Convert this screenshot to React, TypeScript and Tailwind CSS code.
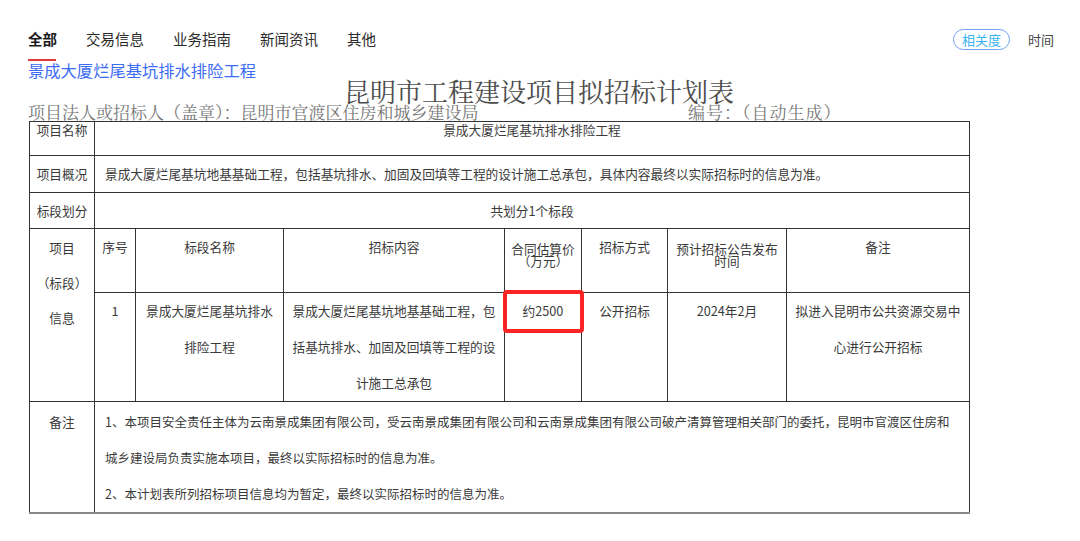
import React from 'react';

const sans = { fontFamily: '"Noto Sans CJK SC", "Noto Sans", sans-serif' };
const serif = { fontFamily: '"Noto Serif CJK SC", "Noto Sans CJK SC", serif' };

const tabs = ['全部', '交易信息', '业务指南', '新闻资讯', '其他'];

const cell = 'border border-[#333] p-0 align-top text-center';

const App: React.FC = () => {
  return (
    <div className="w-[1080px] h-[541px] bg-white overflow-hidden text-[#333]" style={sans}>
      {/* top tabs */}
      <div className="flex items-center justify-between pt-[28px] pl-[28px] pr-[26px] h-[50px]">
        <div className="flex items-center gap-[29px] h-[22px]">
          {tabs.map((t, i) => (
            <div
              key={t}
              className={
                i === 0
                  ? 'relative text-[14.5px] leading-[22px] font-bold text-[#1a1a1a]'
                  : 'text-[14.5px] leading-[22px] text-[#2b2b2b]'
              }
            >
              {t}
              {i === 0 && <span className="absolute left-0 top-[31px] h-[2px] w-[28px] bg-[#e33b3b]" />}
            </div>
          ))}
        </div>
        <div className="flex items-center gap-[18px]">
          <span className="h-[21px] w-[57px] rounded-full border border-[#72a2f4] text-[13px] leading-[19px] text-center text-[#3bb3ef]">
            相关度
          </span>
          <span className="text-[13px] leading-[21px] text-[#444]">时间</span>
        </div>
      </div>

      {/* document */}
      <div className="pl-[28px] mt-[11px]">
        <div className="text-[16.3px] leading-[18px] text-[#3d6cf2]">景成大厦烂尾基坑排水排险工程</div>
      </div>
      <div className="h-[24px] text-center text-[26px] leading-[24px] text-[#4d4d4d] -ml-[2px]" style={serif}>
        昆明市工程建设项目拟招标计划表
      </div>
      <div className="flex pl-[28px] h-[18px] text-[17px] leading-[18px] text-[#777]" style={serif}>
        <span className="w-[660px]">项目法人或招标人（盖章）：昆明市官渡区住房和城乡建设局</span>
        <span className="tracking-[1px]">编号：（自动生成）</span>
      </div>

      <div className="pl-[29px]">
        <table className="border-collapse table-fixed w-[940px] text-[12.7px] text-[#3a3a3a]">
          <colgroup>
            <col className="w-[65px]" />
            <col className="w-[41px]" />
            <col className="w-[148px]" />
            <col className="w-[221px]" />
            <col className="w-[77px]" />
            <col className="w-[86px]" />
            <col className="w-[119px]" />
            <col className="w-[183px]" />
          </colgroup>
          <tbody>
            <tr className="h-[34px]">
              <td className={`${cell} leading-[14px] pt-[1px]`}>项目名称</td>
              <td className={`${cell} leading-[14px] pt-[1px]`} colSpan={7}>
                景成大厦烂尾基坑排水排险工程
              </td>
            </tr>
            <tr className="h-[37px]">
              <td className={`${cell} !align-middle`}>项目概况</td>
              <td className={`${cell} !align-middle !text-left pl-[10px]`} colSpan={7}>
                景成大厦烂尾基坑地基基础工程，包括基坑排水、加固及回填等工程的设计施工总承包，具体内容最终以实际招标时的信息为准。
              </td>
            </tr>
            <tr className="h-[36px]">
              <td className={`${cell} !align-middle`}>标段划分</td>
              <td className={`${cell} !align-middle`} colSpan={7}>
                共划分1个标段
              </td>
            </tr>
            <tr className="h-[64px]">
              <td className={`${cell} leading-[35px] pt-[1px]`} rowSpan={2}>
                项目
                <br />
                （标段）
                <br />
                信息
              </td>
              <td className={`${cell} leading-[36px]`}>序号</td>
              <td className={`${cell} leading-[36px]`}>标段名称</td>
              <td className={`${cell} leading-[36px]`}>招标内容</td>
              <td className={`${cell} leading-[12px] pt-[14px]`}>
                合同估算价
                <br />
                （万元）
              </td>
              <td className={`${cell} leading-[36px]`}>招标方式</td>
              <td className={`${cell} leading-[12px] pt-[14px]`}>
                预计招标公告发布
                <br />
                时间
              </td>
              <td className={`${cell} leading-[36px]`}>备注</td>
            </tr>
            <tr className="h-[108px]">
              <td className={`${cell} leading-[36px]`}>1</td>
              <td className={`${cell} leading-[36px]`}>
                景成大厦烂尾基坑排水
                <br />
                排险工程
              </td>
              <td className={`${cell} leading-[36px]`}>
                景成大厦烂尾基坑地基基础工程，包
                <br />
                括基坑排水、加固及回填等工程的设
                <br />
                计施工总承包
              </td>
              <td className={`${cell} leading-[36px] relative`}>
                约2500
                <span className="absolute left-[-2px] top-[-3px] w-[81px] h-[43px] border-[4px] border-[#fb2424] rounded-[4px]" />
              </td>
              <td className={`${cell} leading-[36px]`}>公开招标</td>
              <td className={`${cell} leading-[36px]`}>2024年2月</td>
              <td className={`${cell} leading-[36px]`}>
                拟进入昆明市公共资源交易中
                <br />
                心进行公开招标
              </td>
            </tr>
            <tr className="h-[109px]">
              <td className={`${cell} leading-[36px] pt-[2px] border-b-2 border-b-[#888]`}>备注</td>
              <td
                className={`${cell} !text-left pl-[10px] leading-[36px] pt-[2px] text-[12.5px] whitespace-nowrap border-b-2 border-b-[#888]`}
                colSpan={7}
              >
                1、本项目安全责任主体为云南景成集团有限公司，受云南景成集团有限公司和云南景成集团有限公司破产清算管理相关部门的委托，昆明市官渡区住房和
                <br />
                城乡建设局负责实施本项目，最终以实际招标时的信息为准。
                <br />
                2、本计划表所列招标项目信息均为暂定，最终以实际招标时的信息为准。
              </td>
            </tr>
          </tbody>
        </table>
      </div>
    </div>
  );
};

export default App;
